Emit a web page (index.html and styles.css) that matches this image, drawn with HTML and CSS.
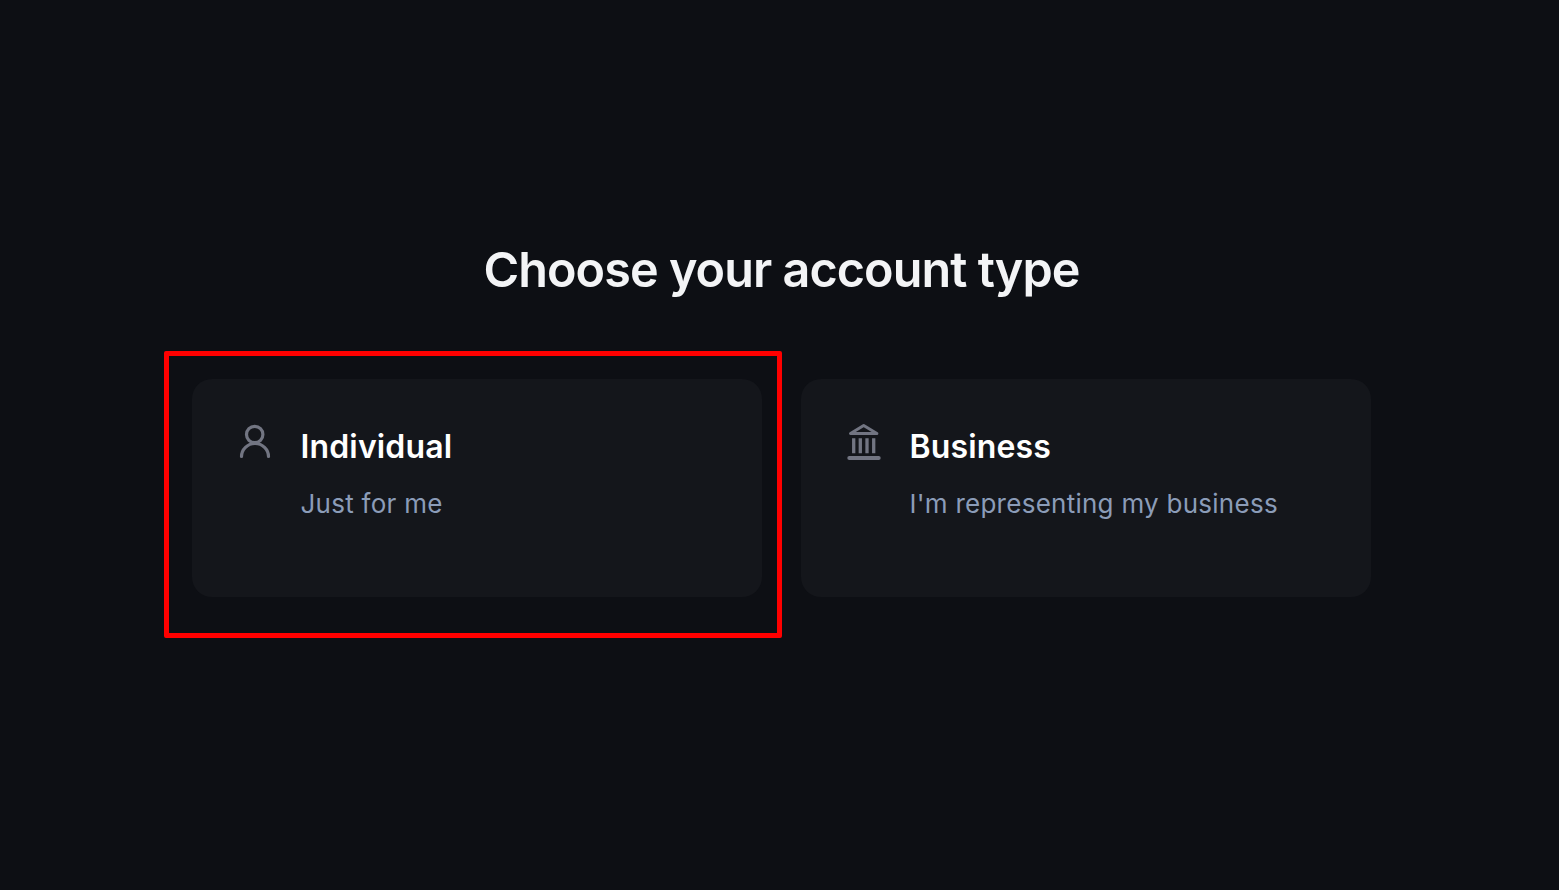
FILE: index.html
```html
<!DOCTYPE html>
<html lang="en">
<head>
<meta charset="utf-8">
<title>Choose your account type</title>
<link rel="stylesheet" href="styles.css">
</head>
<body>
<main class="page">
  <h1 class="title">Choose your account type</h1>
  <div class="options">
    <section class="card">
      <svg class="icon" width="32" height="36" viewBox="0 0 32 36" fill="none" stroke="currentColor" stroke-width="3.2" stroke-linecap="round">
        <circle cx="15.7" cy="10.5" r="8.2"/>
        <path d="M2.5 32.5a13.5 13 0 0 1 27 0"/>
      </svg>
      <div class="text">
        <h2 class="name">Individual</h2>
        <p class="desc">Just for me</p>
      </div>
    </section>
    <section class="card">
      <svg class="icon" width="32" height="36" viewBox="0 0 32 36" fill="none" stroke="currentColor" stroke-width="3" stroke-linecap="round" stroke-linejoin="round">
        <path d="M15.7 1.5 2.5 9.5h26.4z"/>
        <path d="M5.7 14.3v15M12.3 14.3v15M19 14.3v15M25.7 14.3v15" stroke-width="3.3" stroke-linecap="butt"/>
        <path d="M1.3 34h29.4" stroke-width="4"/>
      </svg>
      <div class="text">
        <h2 class="name">Business</h2>
        <p class="desc">I'm representing my business</p>
      </div>
    </section>
  </div>
  <div class="highlight"></div>
</main>
</body>
</html>
```
FILE: styles.css
```css
* { box-sizing: border-box; }
html, body { margin: 0; height: 100%; }
body {
  background: #0d0f14;
  font-family: Inter, "Liberation Sans", sans-serif;
  overflow: hidden;
}
.page {
  position: relative;
  width: 1179px;
  margin-left: 192px;
  padding-top: 241px;
}
.title {
  margin: 0 0 80px;
  height: 58px;
  font-size: 48.5px;
  line-height: 58px;
  font-weight: 600;
  letter-spacing: -0.94px;
  color: #f3f4f6;
  text-align: center;
}
.options {
  display: grid;
  grid-template-columns: 570px 570px;
  column-gap: 39px;
}
.card {
  display: flex;
  gap: 29.5px;
  height: 218px;
  padding: 45px 47px;
  background: #14161b;
  border-radius: 20px;
}
.icon {
  flex: none;
  overflow: visible;
  color: #727582;
}
.text { padding-top: 3px; }
.name {
  margin: 0 0 19px;
  font-size: 32px;
  line-height: 40px;
  font-weight: 600;
  letter-spacing: 0.15px;
  color: #ffffff;
}
.desc {
  margin: 0;
  font-size: 26px;
  line-height: 36px;
  letter-spacing: 0.26px;
  color: #8b9cb8;
}
.highlight {
  position: absolute;
  left: -28px;
  top: 351px;
  width: 618px;
  height: 287px;
  border: 5px solid #ff0000;
  border-radius: 2px;
  pointer-events: none;
}
```
